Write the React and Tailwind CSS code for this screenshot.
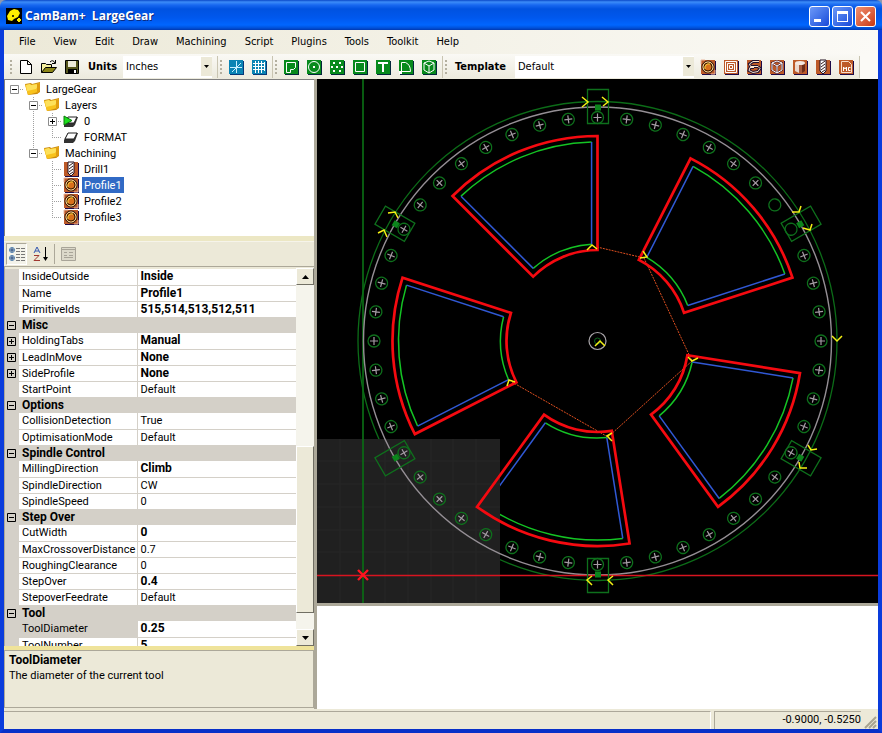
import React, { useState } from 'react';

const menus = ['File', 'View', 'Edit', 'Draw', 'Machining', 'Script', 'Plugins', 'Tools', 'Toolkit', 'Help'];

const tree = [
  { label: 'LargeGear', cells: ['root'], icon: 'folder' },
  { label: 'Layers', cells: ['blank', 'minus'], icon: 'folder' },
  { label: '0', cells: ['blank', 'line', 'plus'], icon: 'activeLayer' },
  { label: 'FORMAT', cells: ['blank', 'line', 'end'], icon: 'layer' },
  { label: 'Machining', cells: ['blank', 'minusEnd'], icon: 'folder' },
  { label: 'Drill1', cells: ['blank', 'blank', 'tee'], icon: 'drill' },
  { label: 'Profile1', cells: ['blank', 'blank', 'tee'], icon: 'profile' },
  { label: 'Profile2', cells: ['blank', 'blank', 'tee'], icon: 'profile' },
  { label: 'Profile3', cells: ['blank', 'blank', 'end'], icon: 'profile' },
];

const properties = [
  { name: 'InsideOutside', value: 'Inside', bold: true },
  { name: 'Name', value: 'Profile1', bold: true },
  { name: 'PrimitiveIds', value: '515,514,513,512,511', bold: true },
  { group: 'Misc' },
  { name: 'HoldingTabs', value: 'Manual', bold: true, expand: true },
  { name: 'LeadInMove', value: 'None', bold: true, expand: true },
  { name: 'SideProfile', value: 'None', bold: true, expand: true },
  { name: 'StartPoint', value: 'Default' },
  { group: 'Options' },
  { name: 'CollisionDetection', value: 'True' },
  { name: 'OptimisationMode', value: 'Default' },
  { group: 'Spindle Control' },
  { name: 'MillingDirection', value: 'Climb', bold: true },
  { name: 'SpindleDirection', value: 'CW' },
  { name: 'SpindleSpeed', value: '0' },
  { group: 'Step Over' },
  { name: 'CutWidth', value: '0', bold: true },
  { name: 'MaxCrossoverDistance', value: '0.7' },
  { name: 'RoughingClearance', value: '0' },
  { name: 'StepOver', value: '0.4', bold: true },
  { name: 'StepoverFeedrate', value: 'Default' },
  { group: 'Tool' },
  { name: 'ToolDiameter', value: '0.25', bold: true, selected: true },
  { name: 'ToolNumber', value: '5', bold: true },
];

/* ---------- small icons ---------- */

const Folder = () => (
  <svg width="16" height="16" viewBox="0 0 16 16">
    <path d="M0 3l6-1 1 1 8-2v10l-3 2-9 1z" fill="#c98a10" />
    <path d="M0 4l5-1 1 1 9-2-2 9-10 3z" fill="#f8c21c" />
    <path d="M1 4l4-1 1 1 8-1-3 5-9 2z" fill="#fde05a" />
    <path d="M12 3l3-1v8l-3 3z" fill="#e09c10" />
  </svg>
);

const Layer = ({ active }) => (
  <svg width="16" height="16" viewBox="0 0 16 16">
    <path d="M1 11l4-7h10l-3 8-2 2H1z" fill="#333" />
    <path d="M2 10l3-6h9l-3 6z" fill="#fff" stroke="#222" />
    {active && <path d="M1 3l8 4.500-8 4.500z" fill="#1ee01e" stroke="#0a7a0a" />}
  </svg>
);

const MachineTile = ({ children }) => (
  <svg width="16" height="16" viewBox="0 0 16 16" fill="none">
    <path d="M2 2h14v14H2z" fill="#1c0a48" />
    <path d="M1 1h14v14H1z" fill="#bd5a28" />
    {children}
  </svg>
);

const ProfileIcon = () => (
  <MachineTile>
    <circle cx="8" cy="8" r="6" stroke="#1a1010" />
    <circle cx="8" cy="8" r="5" stroke="#ffe9a0" />
    <circle cx="8" cy="8" r="4" fill="#d8701c" stroke="#3a1c00" />
    <path d="M5 10a4 4 0 0 1 5-5" stroke="#ffd43c" />
    <path d="M1 5V1h4M15 11v4h-4" stroke="#e8b8a0" />
  </MachineTile>
);

const DrillIcon = () => (
  <MachineTile>
    <path d="M5 1h6v11l-3 3-3-3z" fill="#fff" stroke="#201020" />
    <path d="M6 5l4-3M6 8l4-3M6 11l4-3M7 13l3-2" stroke="#301818" />
  </MachineTile>
);

const PocketIcon = () => (
  <MachineTile>
    <path d="M2.500 2.500h11v11h-11zM4.500 4.500h7v7h-7zM6.500 6.500h3v3h-3z" stroke="#fff" />
  </MachineTile>
);

const EngraveIcon = () => (
  <MachineTile>
    <path d="M13 2.500H7L3.500 5l1 2.500H12M12 7.500l2 2-2 3-5 1-4-2 1-3h4" stroke="#201030" strokeWidth="3" />
    <path d="M13 2.500H7L3.500 5l1 2.500H12M12 7.500l2 2-2 3-5 1-4-2 1-3h4" stroke="#ffe8d0" />
  </MachineTile>
);

const Profile3dIcon = () => (
  <MachineTile>
    <path d="M8 2l5 2v7l-5 3-5-3V4zM3 4l5 3 5-3M8 7v7" stroke="#4a2030" strokeWidth="2" />
    <path d="M8 2l5 2v7l-5 3-5-3V4zM3 4l5 3 5-3M8 7v7" stroke="#fff" />
  </MachineTile>
);

const LatheIcon = () => (
  <MachineTile>
    <path d="M3 4v8q5 4 10 0V4z" fill="#a85c40" />
    <path d="M3 4v8l4 2V4z" fill="#ecd8cc" />
    <path d="M10 5v9l3-2V4z" fill="#6c2c18" />
    <ellipse cx="8" cy="4" rx="5" ry="2" fill="#f4e8e0" />
  </MachineTile>
);

const McIcon = () => (
  <MachineTile>
    <path d="M3.500 13.500v-11h7l3 3v8z" stroke="#f8dcc8" />
    <path d="M5.500 12V8l1.500 2 1.500-2v4M12.500 8.500h-2v3h2" stroke="#fff" />
  </MachineTile>
);

const treeIcons = {
  folder: <Folder />,
  layer: <Layer />,
  activeLayer: <Layer active />,
  drill: <DrillIcon />,
  profile: <ProfileIcon />,
};

const DrawTile = ({ color, shadow, children }) => (
  <svg width="16" height="16" viewBox="0 0 16 16" fill="none" stroke="#fff">
    <path d="M2 2h14v14H2z" fill={shadow} stroke="none" />
    <path d="M1 1h14v14H1z" fill={color} stroke="none" />
    {children}
  </svg>
);

const viewTools = [
  { label: 'Show axes', art: <path d="M8.500 2v12M2 8.500h12M4 13l9-9" stroke="#c8f0ff" /> },
  { label: 'Show grid', art: <path d="M2 4.500h12M2 7.500h12M2 10.500h12M4.500 2v12M7.500 2v12M10.500 2v12M13.500 3v9" /> },
];

const drawTools = [
  { label: 'Polyline', art: <path d="M3.500 13.500v-10h9v5l-2 2h-3v3z" /> },
  { label: 'Circle', art: <><circle cx="8" cy="8" r="5.500" /><path d="M7 7h2v2H7z" fill="#fff" stroke="none" /></> },
  { label: 'Point list', art: <path d="M4 3h2v2H4zM10 3h2v2h-2zM2 7h2v2H2zM7 7h2v2H7zM12 7h2v2h-2zM4 11h2v2H4zM10 11h2v2h-2z" fill="#fff" stroke="none" /> },
  { label: 'Rectangle', art: <path d="M3.500 3.500h9v9h-9z" /> },
  { label: 'Text', art: <path d="M3 4h10M8 4v9" strokeWidth="2" /> },
  { label: 'Arc', art: <><path d="M3.500 12.500v-9h4q5 2 5 9z" /><path d="M1 12h3v3H1z" fill="#fff" stroke="none" /></> },
  { label: 'Surface', art: <path d="M8 2l5 2v7l-5 3-5-3V4zM3 4l5 3 5-3M8 7v7" /> },
];

const machineTools = [
  { label: 'Profile', art: <ProfileIcon /> },
  { label: 'Pocket', art: <PocketIcon /> },
  { label: 'Engrave', art: <EngraveIcon /> },
  { label: '3D profile', art: <Profile3dIcon /> },
  { label: 'Lathe', art: <LatheIcon /> },
  { label: 'Drill', art: <DrillIcon /> },
  { label: 'Machine code', art: <McIcon /> },
];

/* ---------- tool bar parts ---------- */

const Grip = () => (
  <svg className="mr-px ml-[2px] shrink-0" width="3" height="16" viewBox="0 0 3 16">
    {[1, 5, 9, 13].map((y) => (
      <path key={y} d={`M0 ${y}h2v2H0z`} fill="#b4b0a0" />
    ))}
  </svg>
);

const Separator = () => <div className="h-[22px] w-px shrink-0 bg-[#c9c5b2]" />;

const ToolButton = ({ label, children }) => (
  <button type="button" aria-label={label} title={label} className="flex h-5 w-[23px] shrink-0 items-center justify-center">
    {children}
  </button>
);

const Combo = ({ id, options, className }) => (
  <div className={`flex h-[22px] shrink-0 items-center bg-white ${className}`}>
    <select id={id} className="h-full min-w-0 flex-1 appearance-none bg-white pl-[3px] text-[11px] outline-none">
      {options.map((o) => (
        <option key={o}>{o}</option>
      ))}
    </select>
    <span className="pointer-events-none flex h-[19px] w-[11px] items-center justify-center bg-[#ece9d8]">
      <svg width="5" height="3" viewBox="0 0 5 3"><path d="M0 0h5L2.500 3z" /></svg>
    </span>
  </div>
);

/* ---------- title bar ---------- */

const TitleBar = () => (
  <header className="flex h-[30px] shrink-0 items-center rounded-t-md bg-[linear-gradient(#0a48c8_0px,#3c8cf8_2px,#1868f0_5px,#0052e0_9px,#0058ee_18px,#0066ff_25px,#0050d8_28px,#0038b0_30px)] px-[6px] pt-[2px]">
    <svg width="16" height="16" viewBox="0 0 16 16">
      <path d="M0 0h16v16H0z" fill="#000" />
      <path d="M1 8l3-5 4-2 4 1 2 3-2 4-4 2-2 2-4-1z" fill="#ffee00" />
      <circle cx="7" cy="8" r="1" fill="#000" />
      <path d="M13 10v4M11 12h4" stroke="#ffee00" strokeWidth="2" />
    </svg>
    <h1 className="ml-[3px] flex-1 font-['Open_Sans',sans-serif] text-[12px] font-bold whitespace-pre text-white [text-shadow:1px_1px_#0a2a80]">
      CamBam+  LargeGear
    </h1>
    <div className="flex gap-[2px]">
      <button type="button" aria-label="Minimize" className="h-[21px] w-[21px] rounded-[3px] border border-white bg-linear-to-br from-[#6c98f8] to-[#1a48d8]">
        <svg width="19" height="19" viewBox="0 0 19 19"><path d="M4 12h7v3H4z" fill="#fff" /></svg>
      </button>
      <button type="button" aria-label="Maximize" className="h-[21px] w-[21px] rounded-[3px] border border-white bg-linear-to-br from-[#6c98f8] to-[#1a48d8]">
        <svg width="19" height="19" viewBox="0 0 19 19"><path d="M4 4h11v11H4zM5 7v7h9V7z" fill="#fff" fillRule="evenodd" /></svg>
      </button>
      <button type="button" aria-label="Close" className="h-[21px] w-[21px] rounded-[3px] border border-white bg-linear-to-br from-[#f09070] to-[#c83408]">
        <svg width="19" height="19" viewBox="0 0 19 19"><path d="M5 5l9 9M14 5l-9 9" stroke="#fff" strokeWidth="2" /></svg>
      </button>
    </div>
  </header>
);

const ToolBar = () => (
  <div className="flex h-[25px] shrink-0 items-center bg-linear-to-b from-[#faf9f5] to-[#eceadd] pl-1">
    <Grip />
    <ToolButton label="New">
      <svg width="16" height="16" viewBox="0 0 16 16"><path d="M2.500 1.500h7l4 4v9h-11zM9.500 1.500v4h4" fill="#fff" stroke="#000" /></svg>
    </ToolButton>
    <ToolButton label="Open">
      <svg width="17" height="16" viewBox="0 0 17 16">
        <path d="M1.500 13.500v-9h4l1 1h5v3" fill="#f4ee9c" stroke="#000" />
        <path d="M1.500 13.500l4-5h11l-4 5z" fill="#8c8618" stroke="#000" />
        <path d="M10 3q3-3 5 1M15.500 1v3.500H12" fill="none" stroke="#000" />
      </svg>
    </ToolButton>
    <ToolButton label="Save">
      <svg width="16" height="16" viewBox="0 0 16 16">
        <path d="M1.500 1.500h13v13h-13z" fill="#55551c" stroke="#000" />
        <path d="M4 2h8v6H4z" fill="#ece9d8" />
        <path d="M4 10h9v5H4z" fill="#000" />
        <path d="M10 11h2v3h-2z" fill="#fff" />
      </svg>
    </ToolButton>
    <label htmlFor="units" className="w-10 shrink-0 pl-[5px] font-bold">Units</label>
    <Combo id="units" options={['Inches', 'Millimeters']} className="mr-[5px] w-[89px]" />
    <Separator />
    <Grip />
    <div className="mr-[2px] flex">
      {viewTools.map((t) => (
        <ToolButton key={t.label} label={t.label}>
          <DrawTile color="#0a84b4" shadow="#063878">{t.art}</DrawTile>
        </ToolButton>
      ))}
    </div>
    <Separator />
    <Grip />
    <div className="mr-[2px] flex">
      {drawTools.map((t) => (
        <ToolButton key={t.label} label={t.label}>
          <DrawTile color="#078a1c" shadow="#04283c">{t.art}</DrawTile>
        </ToolButton>
      ))}
    </div>
    <Separator />
    <Grip />
    <label htmlFor="template" className="w-[66px] shrink-0 pl-[6px] font-bold">Template</label>
    <Combo id="template" options={['Default']} className="w-[179px]" />
    <div className="mx-[2px] flex">
      {machineTools.map((t) => (
        <ToolButton key={t.label} label={t.label}>{t.art}</ToolButton>
      ))}
    </div>
    <Separator />
    <div className="h-full flex-1 bg-[#fbfaf6]" />
  </div>
);

/* ---------- left panel ---------- */

const TreeCell = ({ kind }) => {
  const up = !['blank', 'root'].includes(kind);
  const down = ['minus', 'plus', 'tee', 'line'].includes(kind);
  const right = !['blank', 'line'].includes(kind);
  const box = ['root', 'minus', 'minusEnd', 'plus'].includes(kind);
  return (
    <svg className="shrink-0" width="19" height="16" viewBox="0 0 19 16" fill="none">
      <g stroke="#a0a0a0" strokeDasharray="1 1">
        {up && <path d="M9.500 0v8" />}
        {down && <path d="M9.500 8v8" />}
        {right && <path d="M9 8.500h10" />}
      </g>
      {box && <path d="M5.500 4.500h8v8h-8z" fill="#fff" stroke="#8c8c8c" />}
      {box && <path d={kind === 'plus' ? 'M7 8.500h5M9.500 6v5' : 'M7 8.500h5'} stroke="#000" />}
    </svg>
  );
};

const ProjectTree = ({ selected, onSelect }) => (
  <ul className="h-[157px] shrink-0 overflow-hidden border-t border-l border-[#808080] bg-white pt-px">
    {tree.map((node) => (
      <li key={node.label} className="flex h-4 items-center">
        {node.cells.map((kind, i) => (
          <TreeCell key={i} kind={kind} />
        ))}
        <span className="pl-px">{treeIcons[node.icon]}</span>
        <button
          type="button"
          onClick={() => onSelect(node.label)}
          className={node.label === selected
            ? 'ml-[3px] h-4 bg-[#316ac5] px-[2px] pt-px leading-[15px] text-white'
            : 'ml-[3px] h-4 px-[2px] pt-px leading-[15px]'}
        >
          {node.label}
        </button>
      </li>
    ))}
  </ul>
);

const GridToolbar = () => (
  <div className="flex h-[25px] shrink-0 items-center gap-[2px] border-t border-[#f6f4ea] px-[2px]">
    <button type="button" aria-label="Categorized" className="flex h-[22px] w-[21px] items-center justify-center border border-t-[#aca899] border-l-[#aca899] border-r-white border-b-white bg-[#f4f3ea]">
      <svg width="18" height="16" viewBox="0 0 18 16" fill="none">
        <circle cx="4" cy="4" r="2.500" stroke="#4878a8" />
        <circle cx="4" cy="12" r="2.500" stroke="#4878a8" />
        <path d="M2 4h4M4 2v4M2 12h4M4 10v4" stroke="#143c78" />
        <path d="M8 2.500h4M13 2.500h4M8 5.500h4M13 5.500h4M8 8.500h4M13 8.500h4M8 11.500h4M13 11.500h4M8 14.500h4M13 14.500h4" stroke="#777" />
      </svg>
    </button>
    <button type="button" aria-label="Alphabetical" className="flex h-[22px] w-[23px] items-center justify-center">
      <svg width="16" height="16" viewBox="0 0 16 16" fill="none">
        <path d="M1 7l3-6 3 6M2 5h4" stroke="#3458b0" />
        <path d="M1 9.500h5L1 14.500h6" stroke="#a03830" />
        <path d="M12.500 1v11" stroke="#000" />
        <path d="M10 11h5l-2.500 4z" fill="#000" />
      </svg>
    </button>
    <div className="h-5 w-px bg-[#aca899]" />
    <button type="button" aria-label="Property pages" disabled className="flex h-[22px] w-[23px] items-center justify-center">
      <svg width="17" height="16" viewBox="0 0 17 16" fill="none" stroke="#a8a498">
        <path d="M1.500 1.500h14v13h-14zM2 3.500h13" fill="#dcd9ca" />
        <path d="M4 6.500h3M9 6.500h4M4 9.500h3M9 9.500h4M4 11.500h9" />
      </svg>
    </button>
  </div>
);

const ExpandBox = ({ plus }) => (
  <svg width="9" height="9" viewBox="0 0 9 9" fill="none" stroke="#000">
    <path d={plus ? 'M.5.5h8v8h-8zM2 4.500h5M4.500 2v5' : 'M.5.5h8v8h-8zM2 4.500h5'} />
  </svg>
);

const PropertyTable = () => (
  <table className="w-full table-fixed border-collapse">
    <colgroup>
      <col className="w-[14px]" />
      <col className="w-[118px]" />
      <col />
    </colgroup>
    <tbody>
      {properties.map((p) => p.group ? (
        <tr key={p.group} className="h-4 bg-[#d4d0c8]">
          <td className="p-0 pl-[2px]"><ExpandBox /></td>
          <th colSpan="2" className="h-4 p-0 pl-[3px] text-left text-[12px] leading-[15px] font-bold">{p.group}</th>
        </tr>
      ) : (
        <tr key={p.name} className="h-4">
          <td className="bg-[#d4d0c8] p-0 pl-[2px]">{p.expand && <ExpandBox plus />}</td>
          <td className={p.selected
            ? 'h-4 border-r border-b border-[#d4d0c8] bg-[#d4d0c8] p-0 pl-[3px] leading-[15px] whitespace-nowrap'
            : 'h-4 border-r border-b border-[#d4d0c8] bg-white p-0 pl-[3px] leading-[15px] whitespace-nowrap'}
          >
            {p.name}
          </td>
          <td className={p.bold
            ? 'h-4 border-b border-[#d4d0c8] bg-white p-0 pl-[3px] text-[12px] leading-[15px] font-bold'
            : 'h-4 border-b border-[#d4d0c8] bg-white p-0 pl-[3px] leading-[15px]'}
          >
            {p.value}
          </td>
        </tr>
      ))}
    </tbody>
  </table>
);

const ScrollBar = () => (
  <div className="flex w-[18px] shrink-0 flex-col bg-[#f5f4ec]">
    <button type="button" aria-label="Scroll up" className="flex h-[17px] items-center justify-center border border-t-white border-l-white border-r-[#716f64] border-b-[#716f64] bg-[#ece9d8]">
      <svg width="7" height="4" viewBox="0 0 7 4"><path d="M0 4h7L3.500 0z" /></svg>
    </button>
    <div className="flex-[161]" />
    <div className="flex-[166] border border-t-white border-l-white border-r-[#716f64] border-b-[#716f64] bg-[#ece9d8]" />
    <div className="flex-[16]" />
    <button type="button" aria-label="Scroll down" className="flex h-[17px] items-center justify-center border border-t-white border-l-white border-r-[#716f64] border-b-[#716f64] bg-[#ece9d8]">
      <svg width="7" height="4" viewBox="0 0 7 4"><path d="M0 0h7L3.500 4z" /></svg>
    </button>
  </div>
);

/* ---------- drawing view ---------- */

const polar = (r, deg) => {
  const a = (deg * Math.PI) / 180;
  return `${(r * Math.sin(a)).toFixed(2)} ${(-r * Math.cos(a)).toFixed(2)}`;
};

const slots = [0, 72, 144, 216, 288];
const slotOutline = `M${polar(205, 0)}A205 205 0 0 0 ${polar(205, -45)}L${polar(91, -45)}A91 91 0 0 1 ${polar(91, 0)}Z`;
const slotArcs = `M${polar(199, -1.7)}A199 199 0 0 0 ${polar(199, -43.3)}M${polar(97, -41.5)}A97 97 0 0 1 ${polar(97, -3.5)}`;
const slotSides = `M${polar(199, -1.7)}L${polar(97, -3.5)}M${polar(199, -43.3)}L${polar(97, -41.5)}`;

const arrows = [
  '587,250 592,245 597,249', '640,258 647,257 643,251', '688,357 692,361 698,358', '612,433 607,436 612,441',
  '507,386 509,380 515,382', '582,97 588,102 582,107', '602,97 608,102 603,106', '388,213 395,212 398,218',
  '378,233 384,230 387,237', '792,212 799,212 801,206', '803,228 810,230 812,224', '832,336 837,341 842,336',
  '808,445 811,450 817,449', '799,462 800,468 807,468', '613,576 608,580 613,585', '592,576 587,580 592,585',
  '595,346 600,341 605,346',
];

const holes = Array.from({ length: 48 }, (_, i) => i * 7.5);
const undrilled = [52.5, 60];

const DrawingView = () => (
  <svg className="min-h-0 w-full flex-1 bg-black" viewBox="317 79 561 524" preserveAspectRatio="xMinYMin meet" fill="none">
    <circle cx="597.500" cy="341" r="239.500" stroke="#0c6c18" strokeWidth="1.300" />
    {slots.map((a) => (
      <g key={a} transform={`translate(597.5 341) rotate(${a})`}>
        <path d={slotArcs} stroke="#14c424" strokeWidth="1.500" />
        <path d={slotSides} stroke="#3058d4" strokeWidth="1.500" />
      </g>
    ))}
    <path d="M317 439h183v164H317z" fill="#202020" />
    <path d="M340 439v164M385 439v164M408 439v164M431 439v164M453 439v164M476 439v164M317 461h183M317 484h183M317 507h183M317 530h183M317 552h183" stroke="#262626" />
    <path d="M363 79v524" stroke="#0a6c14" strokeWidth="1.700" />
    <circle cx="597.500" cy="341" r="234" stroke="#958f95" strokeWidth="1.400" />
    <path d="M317 575.500h561" stroke="#d81420" strokeWidth="1.300" />
    <path d="M597 247L644 258L692 361L608 437L512 382" stroke="#e05020" strokeDasharray="2 1" />
    {slots.map((a) => (
      <path key={a} d={slotOutline} transform={`translate(597.5 341) rotate(${a})`} stroke="#f50a10" strokeWidth="2.700" />
    ))}
    {holes.map((a) => (
      <g key={a} transform={`translate(597.5 341) rotate(${a}) translate(0 -223.5)`}>
        <circle r="6" stroke="#0e701c" strokeWidth="1.300" />
        {!undrilled.includes(a) && <path d="M-4 0h8M0-4v8" stroke="#a49ca4" strokeWidth="1.200" />}
      </g>
    ))}
    {[0, 60, 120, 180, 240, 300].map((a) => (
      <g key={a} transform={`translate(598 341) rotate(${a})`}>
        <path d="M-10.500-251.500h21v34h-21z" stroke="#0e701c" strokeWidth="1.300" />
        <path d="M-3-236.500h6v6h-6z" fill="#0c841c" />
      </g>
    ))}
    <circle cx="597.500" cy="341" r="8.500" stroke="#aaa6aa" strokeWidth="1.200" />
    <circle cx="597.500" cy="341" r="3" stroke="#0c641a" />
    {arrows.map((pts) => (
      <polyline key={pts} points={pts} stroke="#f4f014" strokeWidth="1.500" />
    ))}
    <path d="M358 570l10 10M368 570l-10 10" stroke="#ff1420" strokeWidth="2.400" />
  </svg>
);

const App = () => {
  const [selected, setSelected] = useState('Profile1');

  return (
    <div className="flex h-screen w-full flex-col bg-[#8c98b0] font-['Roboto','Liberation_Sans',sans-serif] text-[11px] leading-[16px] text-black">
      <TitleBar />
      <div className="flex min-h-0 flex-1 flex-col border-4 border-t-0 border-[#0a3cdc] border-b-[#0830c8] bg-[#ece9d8]">
        <div className="flex shrink-0 flex-col font-['DejaVu_Sans_Condensed','DejaVu_Sans',sans-serif]">
          <nav className="flex h-6 items-center gap-[18px] bg-linear-to-r from-[#ece9d8] to-[#fbfaf6] pl-[15px]">
            {menus.map((m) => (
              <button key={m} type="button">{m}</button>
            ))}
          </nav>
          <ToolBar />
        </div>

        <main className="flex min-h-0 flex-1">
          <aside className="flex w-[310px] shrink-0 flex-col">
            <ProjectTree selected={selected} onSelect={setSelected} />
            <div className="h-[5px] shrink-0 bg-[#ece7c4]" />
            <GridToolbar />
            <div className="flex min-h-0 flex-1 border-t border-l border-[#aca899] pt-px">
              <div className="min-w-0 flex-1 overflow-hidden pt-px">
                <PropertyTable />
              </div>
              <ScrollBar />
            </div>
            <div className="h-[4px] shrink-0 bg-[#efe39a]" />
            <div className="mb-px h-[58px] shrink-0 border border-[#aca899] px-1 py-[2px]">
              <h2 className="text-[12px] leading-[15px] font-bold">ToolDiameter</h2>
              <p className="leading-[15px]">The diameter of the current tool</p>
            </div>
          </aside>
          <div className="w-[3px] shrink-0 bg-[#aca899]" />
          <section className="flex min-w-0 flex-1 flex-col">
            <DrawingView />
            <div className="h-[3px] shrink-0 bg-[#aca899]" />
            <div className="h-[103px] shrink-0 bg-white" />
          </section>
        </main>

        <footer className="flex h-5 shrink-0 gap-[3px] pt-[2px]">
          <div className="flex-1 border-t border-r border-t-[#aca899] border-r-white" />
          <div className="w-[147px] border-t border-l border-[#aca899] text-right">-0.9000, -0.5250</div>
          <svg className="self-end" width="14" height="14" viewBox="0 0 14 14" stroke="#a8a490" strokeWidth="2">
            <path d="M1 13L12 2M5 13l7-7M9 13l3-3" />
          </svg>
        </footer>
      </div>
    </div>
  );
};

export default App;
